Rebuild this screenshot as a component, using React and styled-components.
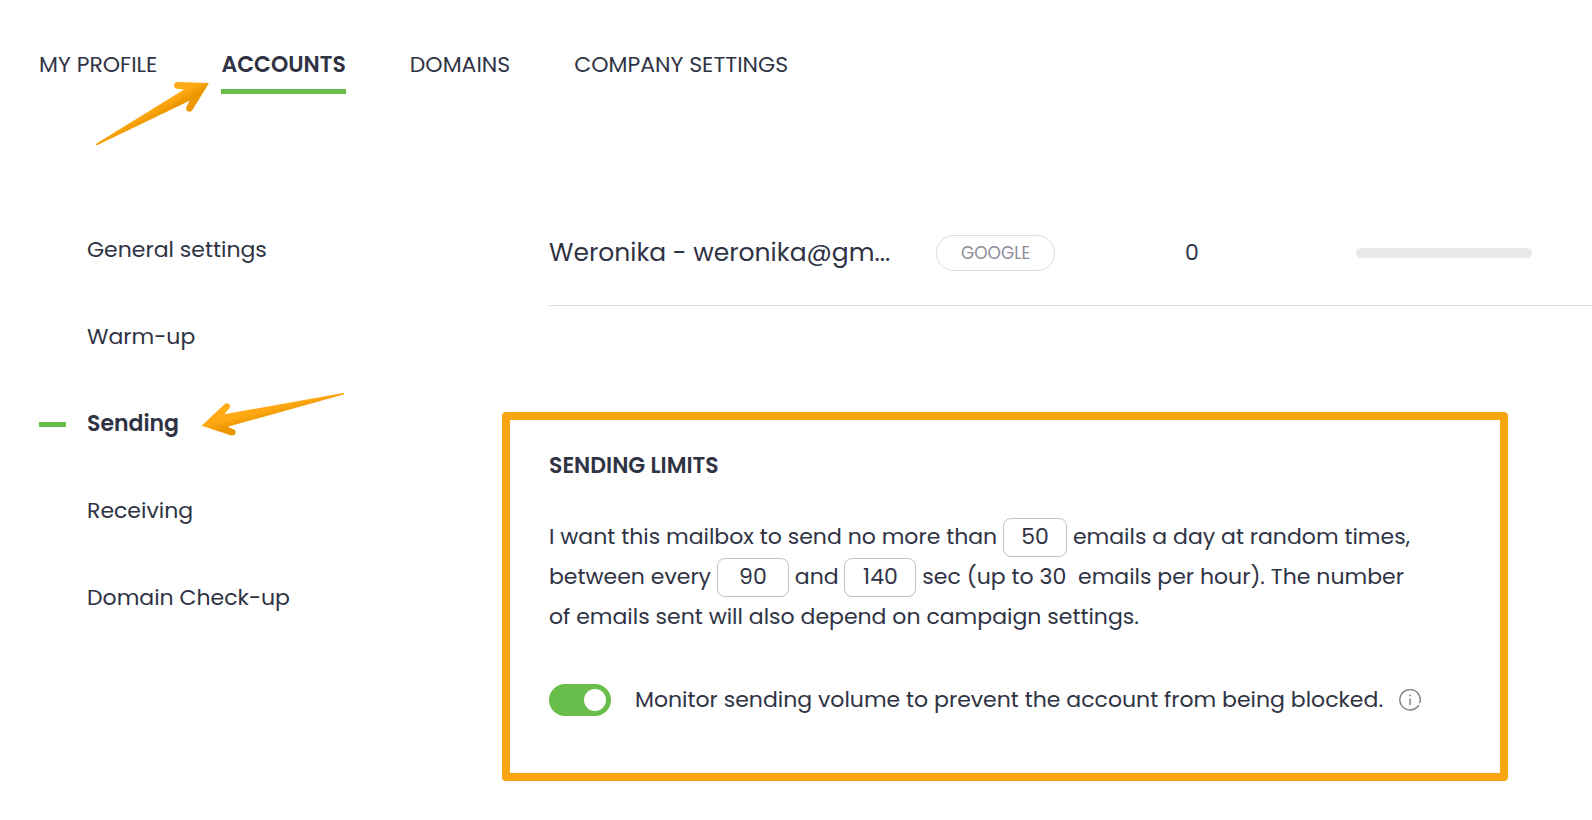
import React, { useState } from "react";
import styled, { createGlobalStyle } from "styled-components";

const ink = "#2f3344";
const green = "#69bd4b";
const amber = "#f8a513";

const GlobalStyle = createGlobalStyle`
  *, *::before, *::after { box-sizing: border-box; }
  body {
    margin: 0;
    background: #fff;
    color: ${ink};
    font-family: Poppins, Inter, "Liberation Sans", sans-serif;
    font-size: 22px;
    line-height: 32px;
  }
`;

const Page = styled.div`
  padding-top: 49px;
  overflow: hidden;
`;

const Tabs = styled.nav`
  display: flex;
  gap: 64px;
  padding-left: 39px;
`;

const Tab = styled.a`
  position: relative;
  padding-bottom: 8px;
  border-bottom: 5px solid ${(p) => (p.$active ? green : "transparent")};
  color: inherit;
  font-weight: ${(p) => (p.$active ? 600 : 400)};
  text-decoration: none;
  white-space: nowrap;
`;

const Columns = styled.div`
  display: grid;
  grid-template-columns: 463px minmax(0, 1fr);
  padding-left: 39px;
  padding-top: 129px;
`;

const SideNav = styled.nav`
  display: flex;
  flex-direction: column;
  align-items: flex-start;
  gap: 55px;
  padding-top: 11px;
`;

const SideLink = styled.a`
  position: relative;
  display: flex;
  align-items: center;
  gap: 21px;
  color: inherit;
  font-weight: ${(p) => (p.$active ? 600 : 400)};
  text-decoration: none;

  &::before {
    content: "";
    width: 27px;
    height: 5px;
    background: ${(p) => (p.$active ? green : "transparent")};
  }
`;

const TabArrow = styled.svg`
  position: absolute;
  right: calc(100% + 12px);
  top: 32px;
`;

const SideArrow = styled.svg`
  position: absolute;
  left: calc(100% + 22px);
  top: -17px;
`;

const Main = styled.main`
  min-width: 0;
`;

const AccountRow = styled.section`
  display: grid;
  grid-template-columns: 387px 1fr 171px 236px;
  align-items: center;
  margin-left: 47px;
  padding: 12px 0 34px;
  border-bottom: 1px solid #dcdddf;
`;

const AccountName = styled.div`
  font-size: 25px;
  line-height: 36px;
  white-space: nowrap;
`;

const Provider = styled.span`
  justify-self: start;
  padding: 0 24px;
  border: 1px solid #dcdddf;
  border-radius: 18px;
  color: #8b8d97;
  font-size: 17px;
  line-height: 34px;
`;

const Quota = styled.div`
  width: 176px;
  height: 10px;
  border-radius: 5px;
  background: #e9e9eb;
`;

const Limits = styled.section`
  margin: 106px 84px 39px 0;
  padding: 30px 39px 57px;
  border: 8px solid ${amber};
  border-radius: 4px;
`;

const Heading = styled.h2`
  margin: 0;
  font-size: 22px;
  font-weight: 600;
  line-height: 32px;
`;

const Sentence = styled.p`
  margin: 35px 0 0;
  line-height: 40px;
`;

const NumberBox = styled.input`
  width: ${(p) => (p.$wide ? 72 : 64)}px;
  height: 39px;
  margin: -4px 0;
  padding: 0;
  border: 1px solid #bfc0c5;
  border-radius: 8px;
  background: #fff;
  color: inherit;
  font: inherit;
  text-align: center;
`;

const MonitorRow = styled.div`
  display: flex;
  align-items: center;
  margin-top: 47px;
`;

const MonitorLabel = styled.label`
  display: flex;
  align-items: center;
  gap: 24px;
`;

const Switch = styled.input`
  appearance: none;
  flex: none;
  width: 62px;
  height: 32px;
  margin: 0;
  padding: 5px;
  border-radius: 16px;
  background: ${(p) => (p.checked ? green : "#c8c9ce")};
  cursor: pointer;

  &::before {
    content: "";
    display: block;
    width: 22px;
    height: 22px;
    margin-left: ${(p) => (p.checked ? "auto" : 0)};
    border-radius: 50%;
    background: #fff;
  }
`;

const InfoButton = styled.button`
  flex: none;
  display: flex;
  margin-left: 16px;
  padding: 0;
  border: 0;
  background: none;
`;

const tabs = ["MY PROFILE", "ACCOUNTS", "DOMAINS", "COMPANY SETTINGS"];
const sections = ["General settings", "Warm-up", "Sending", "Receiving", "Domain Check-up"];

function ArrowToTab() {
  return (
    <TabArrow width="114" height="66" viewBox="95 81 114 66" aria-hidden="true">
      <defs>
        <linearGradient id="tabArrow" gradientUnits="userSpaceOnUse" x1="165" y1="95" x2="175" y2="113">
          <stop offset="0.3" stopColor="#ffa914" />
          <stop offset="0.7" stopColor="#ec9700" />
        </linearGradient>
      </defs>
      <path
        fill="url(#tabArrow)"
        d="M209 83 L177.500 82 C173 82 173 88.300 177 88.800 L184 89.500 L96.500 143.500 Q95 145.200 97.500 145 L189.500 100.700 L186.300 107.300 C185 111.500 190.500 113.500 192.700 109.500 Z"
      />
    </TabArrow>
  );
}

function ArrowToSection() {
  return (
    <SideArrow width="144" height="46" viewBox="201 391 144 46" aria-hidden="true">
      <defs>
        <linearGradient id="sideArrow" gradientUnits="userSpaceOnUse" x1="238" y1="412" x2="242" y2="428">
          <stop offset="0.3" stopColor="#ffa914" />
          <stop offset="0.75" stopColor="#ec9700" />
        </linearGradient>
      </defs>
      <path
        fill="url(#sideArrow)"
        d="M201.500 425.700 L224.300 404.500 C227.500 401.500 232 405 229.200 408.500 L224.300 414.300 L343 393 Q345 393 343.500 394.500 L227.700 426.700 L233.500 429.300 C237.500 431 235.500 436.500 231.500 435.500 Z"
      />
    </SideArrow>
  );
}

function InfoIcon() {
  return (
    <svg width="22" height="22" viewBox="0 0 22 22" fill="none" stroke="#858791" strokeWidth="1.500" strokeLinecap="round" aria-hidden="true">
      <path d="M19.500 16.500 A10.200 10.200 0 1 1 20.900 13.500" />
      <path d="M11 10 V15.500" />
      <circle cx="11" cy="6.500" r="1" fill="#858791" stroke="none" />
    </svg>
  );
}

export default function App() {
  const [perDay, setPerDay] = useState("50");
  const [minGap, setMinGap] = useState("90");
  const [maxGap, setMaxGap] = useState("140");
  const [monitor, setMonitor] = useState(true);

  return (
    <Page>
      <GlobalStyle />
      <Tabs aria-label="Settings">
        {tabs.map((tab) => (
          <Tab key={tab} href="#" $active={tab === "ACCOUNTS"}>
            {tab}
            {tab === "ACCOUNTS" && <ArrowToTab />}
          </Tab>
        ))}
      </Tabs>
      <Columns>
        <SideNav aria-label="Account settings">
          {sections.map((name) => (
            <SideLink key={name} href="#" $active={name === "Sending"}>
              {name}
              {name === "Sending" && <ArrowToSection />}
            </SideLink>
          ))}
        </SideNav>
        <Main>
          <AccountRow>
            <AccountName>Weronika - weronika@gm...</AccountName>
            <Provider>GOOGLE</Provider>
            <span>0</span>
            <Quota />
          </AccountRow>
          <Limits>
            <Heading>SENDING LIMITS</Heading>
            <Sentence>
              I want this mailbox to send no more than{" "}
              <NumberBox aria-label="Emails a day" value={perDay} onChange={(e) => setPerDay(e.target.value)} />{" "}
              emails a day at random times,
              <br />
              between every{" "}
              <NumberBox $wide aria-label="Shortest delay in seconds" value={minGap} onChange={(e) => setMinGap(e.target.value)} />{" "}
              and{" "}
              <NumberBox $wide aria-label="Longest delay in seconds" value={maxGap} onChange={(e) => setMaxGap(e.target.value)} />{" "}
              sec (up to 30&nbsp; emails per hour). The number
              <br />
              of emails sent will also depend on campaign settings.
            </Sentence>
            <MonitorRow>
              <MonitorLabel>
                <Switch type="checkbox" role="switch" checked={monitor} onChange={(e) => setMonitor(e.target.checked)} />
                Monitor sending volume to prevent the account from being blocked.
              </MonitorLabel>
              <InfoButton type="button" aria-label="More information">
                <InfoIcon />
              </InfoButton>
            </MonitorRow>
          </Limits>
        </Main>
      </Columns>
    </Page>
  );
}
